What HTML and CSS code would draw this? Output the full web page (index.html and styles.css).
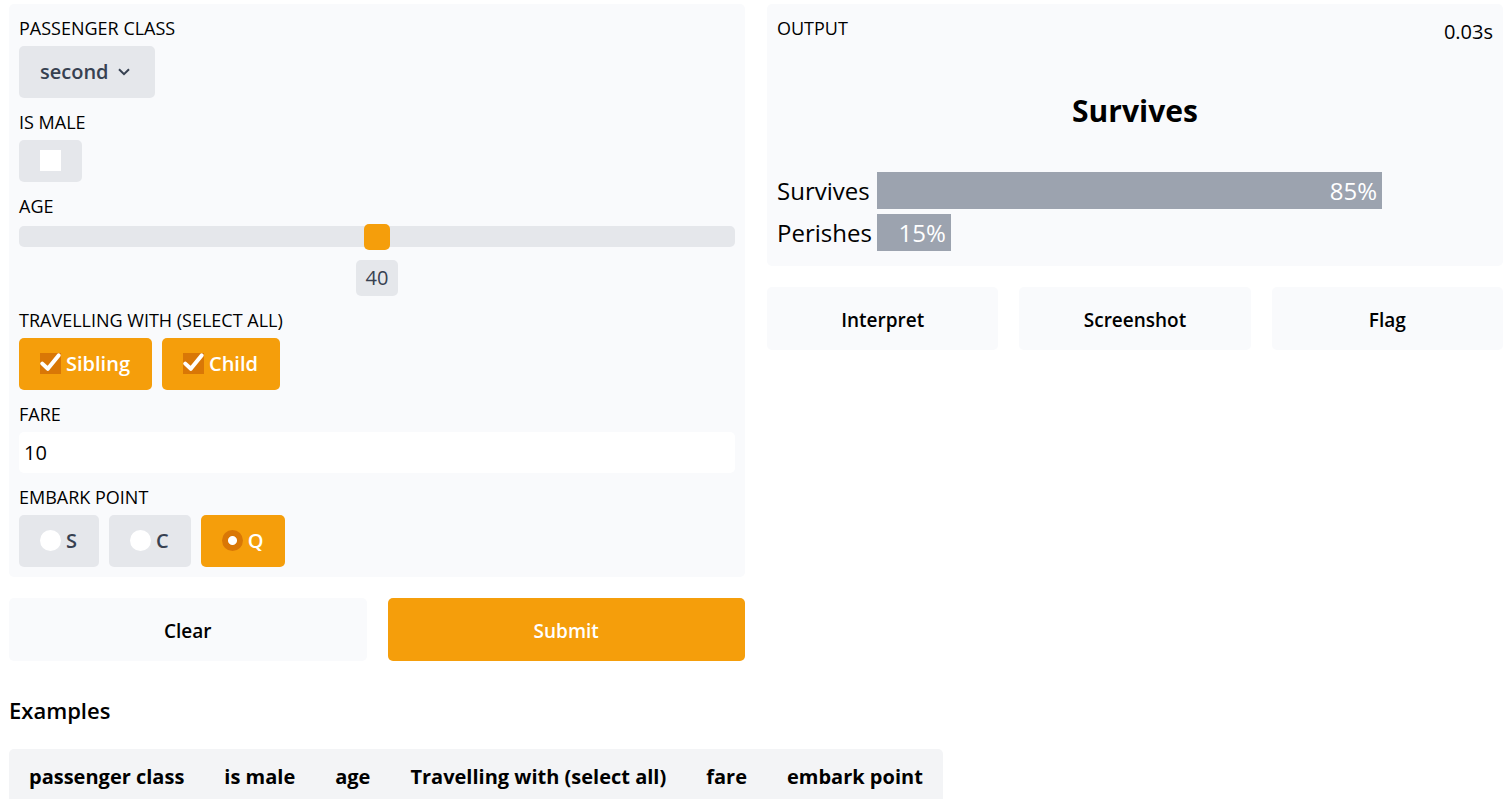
FILE: index.html
```html
<!DOCTYPE html>
<html lang="en">
<head>
<meta charset="utf-8">
<meta name="viewport" content="width=device-width, initial-scale=1">
<title>Survival prediction</title>
<link rel="stylesheet" href="styles.css">
</head>
<body>
<main class="page">
  <div class="columns">
    <form class="column">
      <div class="panel">
        <div class="field">
          <label class="field-label" for="pclass">Passenger class</label>
          <div class="dropdown">
            <select id="pclass" class="dropdown-select">
              <option>first</option>
              <option selected>second</option>
              <option>third</option>
            </select>
            <svg class="dropdown-arrow" viewBox="0 0 12 8" aria-hidden="true"><path d="M1 1.2 6 6.2 11 1.2"/></svg>
          </div>
        </div>
        <div class="field">
          <label class="field-label" for="male">Is male</label>
          <div class="choices"><span class="choice choice-small"><span class="mark"><input id="male" type="checkbox" class="box"></span></span></div>
        </div>
        <div class="field">
          <label class="field-label" for="age">Age</label>
          <input id="age" class="slider" type="range" min="0" max="80" value="40">
          <output class="slider-value" for="age">40</output>
        </div>
        <div class="field" role="group" aria-labelledby="with">
          <span class="field-label" id="with">Travelling with (select all)</span>
          <div class="choices">
            <label class="choice choice-on"><span class="mark"><input type="checkbox" class="box" checked><svg class="tick" viewBox="0 0 21 21" aria-hidden="true"><path d="M2.3 10.6 7.8 15.8 18.6 2.4"/></svg></span>Sibling</label>
            <label class="choice choice-on"><span class="mark"><input type="checkbox" class="box" checked><svg class="tick" viewBox="0 0 21 21" aria-hidden="true"><path d="M2.3 10.6 7.8 15.8 18.6 2.4"/></svg></span>Child</label>
          </div>
        </div>
        <div class="field">
          <label class="field-label" for="fare">Fare</label>
          <input id="fare" class="text-input" type="text" inputmode="decimal" value="10">
        </div>
        <div class="field" role="group" aria-labelledby="embark">
          <span class="field-label" id="embark">Embark point</span>
          <div class="choices">
            <label class="choice"><span class="mark"><input type="radio" name="embark" class="box round"></span>S</label>
            <label class="choice"><span class="mark"><input type="radio" name="embark" class="box round"></span>C</label>
            <label class="choice choice-on"><span class="mark"><input type="radio" name="embark" class="box round" checked></span>Q</label>
          </div>
        </div>
      </div>
      <div class="actions">
        <button class="button" type="reset">Clear</button>
        <button class="button button-primary" type="button">Submit</button>
      </div>
    </form>
    <section class="column">
      <div class="panel">
        <div class="output-head"><span class="field-label">Output</span><span class="timing">0.03s</span></div>
        <h1 class="result">Survives</h1>
        <div class="bars">
          <span>Survives</span><div class="bar" style="width:82%">85%</div>
          <span>Perishes</span><div class="bar" style="width:12%">15%</div>
        </div>
      </div>
      <div class="actions">
        <button class="button" type="button">Interpret</button>
        <button class="button" type="button">Screenshot</button>
        <button class="button" type="button">Flag</button>
      </div>
    </section>
  </div>
  <section class="examples">
    <h2 class="examples-title">Examples</h2>
    <table class="table">
      <thead><tr><th>passenger class</th><th>is male</th><th>age</th><th>Travelling with (select all)</th><th>fare</th><th>embark point</th></tr></thead>
    </table>
  </section>
</main>
</body>
</html>
```
FILE: styles.css
```css
*, *::before, *::after { box-sizing: border-box; }
body {
  margin: 0;
  background: #fff;
  color: #000;
  font: 400 20px/28px "Open Sans", "Noto Sans", sans-serif;
}
button, input, select { font: inherit; margin: 0; border: 0; }
.page { padding: 4px 9px 0; overflow: hidden; }
.columns {
  display: grid;
  grid-template-columns: repeat(2, minmax(0, 1fr));
  gap: 22px;
  align-items: start;
}
.column { display: flex; flex-direction: column; gap: 21px; }
.panel {
  display: flex;
  flex-direction: column;
  gap: 10px;
  padding: 10px;
  background: #f9fafc;
  border-radius: 5px;
}
.field { display: flex; flex-direction: column; gap: 4px; }
.field-label {
  font-size: 18px;
  line-height: 28px;
  text-transform: uppercase;
}
.dropdown { display: grid; width: max-content; align-items: center; }
.dropdown-select {
  grid-area: 1 / 1;
  appearance: none;
  height: 52px;
  padding: 0 46px 0 21px;
  background: #e5e7eb;
  border-radius: 5px;
  color: #374151;
  font-weight: 600;
}
.dropdown-arrow {
  grid-area: 1 / 1;
  justify-self: end;
  width: 12px;
  height: 8px;
  margin-right: 25px;
  fill: none;
  stroke: #374151;
  stroke-width: 2;
  pointer-events: none;
}
.choices { display: flex; flex-wrap: wrap; gap: 10px; }
.choice {
  display: flex;
  align-items: center;
  gap: 5px;
  height: 52px;
  padding: 0 22px 0 21px;
  background: #e5e7eb;
  border-radius: 5px;
  color: #374151;
  font-weight: 600;
}
.choice-small { height: 42px; padding: 0 21px; }
.choice-on { background: #f59e0b; color: #fff; }
.mark { display: grid; padding-bottom: 1px; }
.box {
  grid-area: 1 / 1;
  appearance: none;
  width: 21px;
  height: 21px;
  background: #fff;
}
.box:checked { background: #d97706; }
.round { border-radius: 50%; }
.round:checked { background: radial-gradient(circle, #fff 4px, #d97706 5px); }
.tick {
  grid-area: 1 / 1;
  width: 21px;
  height: 21px;
  fill: none;
  stroke: #fff;
  stroke-width: 4;
  stroke-linecap: round;
  stroke-linejoin: round;
  pointer-events: none;
}
.slider {
  appearance: none;
  width: 100%;
  height: 25px;
  background: transparent;
}
.slider::-webkit-slider-runnable-track {
  height: 21px;
  background: #e5e7eb;
  border-radius: 5px;
}
.slider::-webkit-slider-thumb {
  appearance: none;
  width: 26px;
  height: 26px;
  margin-top: -2px;
  background: #f59e0b;
  border-radius: 5px;
}
.slider-value {
  align-self: center;
  margin-top: 7px;
  padding: 4px 10px;
  background: #e5e7eb;
  border-radius: 5px;
  color: #374151;
}
.text-input {
  width: 100%;
  height: 41px;
  padding: 0 5px;
  background: #fff;
  border-radius: 5px;
  color: #000;
}
.actions { display: grid; grid-auto-flow: column; grid-auto-columns: minmax(0, 1fr); gap: 21px; }
.button {
  height: 63px;
  padding: 2px 0 0;
  background: #f9fafc;
  border-radius: 5px;
  color: #000;
  font-size: 19px;
  font-weight: 600;
}
.button-primary { background: #f59e0b; color: #fff; }
.output-head { display: flex; justify-content: space-between; }
.timing { padding-top: 4px; }
.result {
  margin: 34px 0 30px;
  font-size: 30px;
  line-height: 42px;
  font-weight: 700;
  text-align: center;
}
.bars {
  display: grid;
  grid-template-columns: max-content minmax(0, 1fr);
  gap: 5px;
  padding-bottom: 5px;
  font-size: 24px;
  line-height: 37px;
}
.bar { padding-right: 5px; background: #9ca3af; color: #fff; text-align: right; }
.examples { margin-top: 33px; }
.examples-title { margin: 0 0 23px; font-size: 22px; line-height: 32px; font-weight: 600; }
.table { border-collapse: separate; border-spacing: 0; background: #f3f4f6; border-radius: 5px 5px 0 0; }
.table th { height: 55px; padding: 0 20px; font-weight: 700; white-space: nowrap; text-align: left; }
```
